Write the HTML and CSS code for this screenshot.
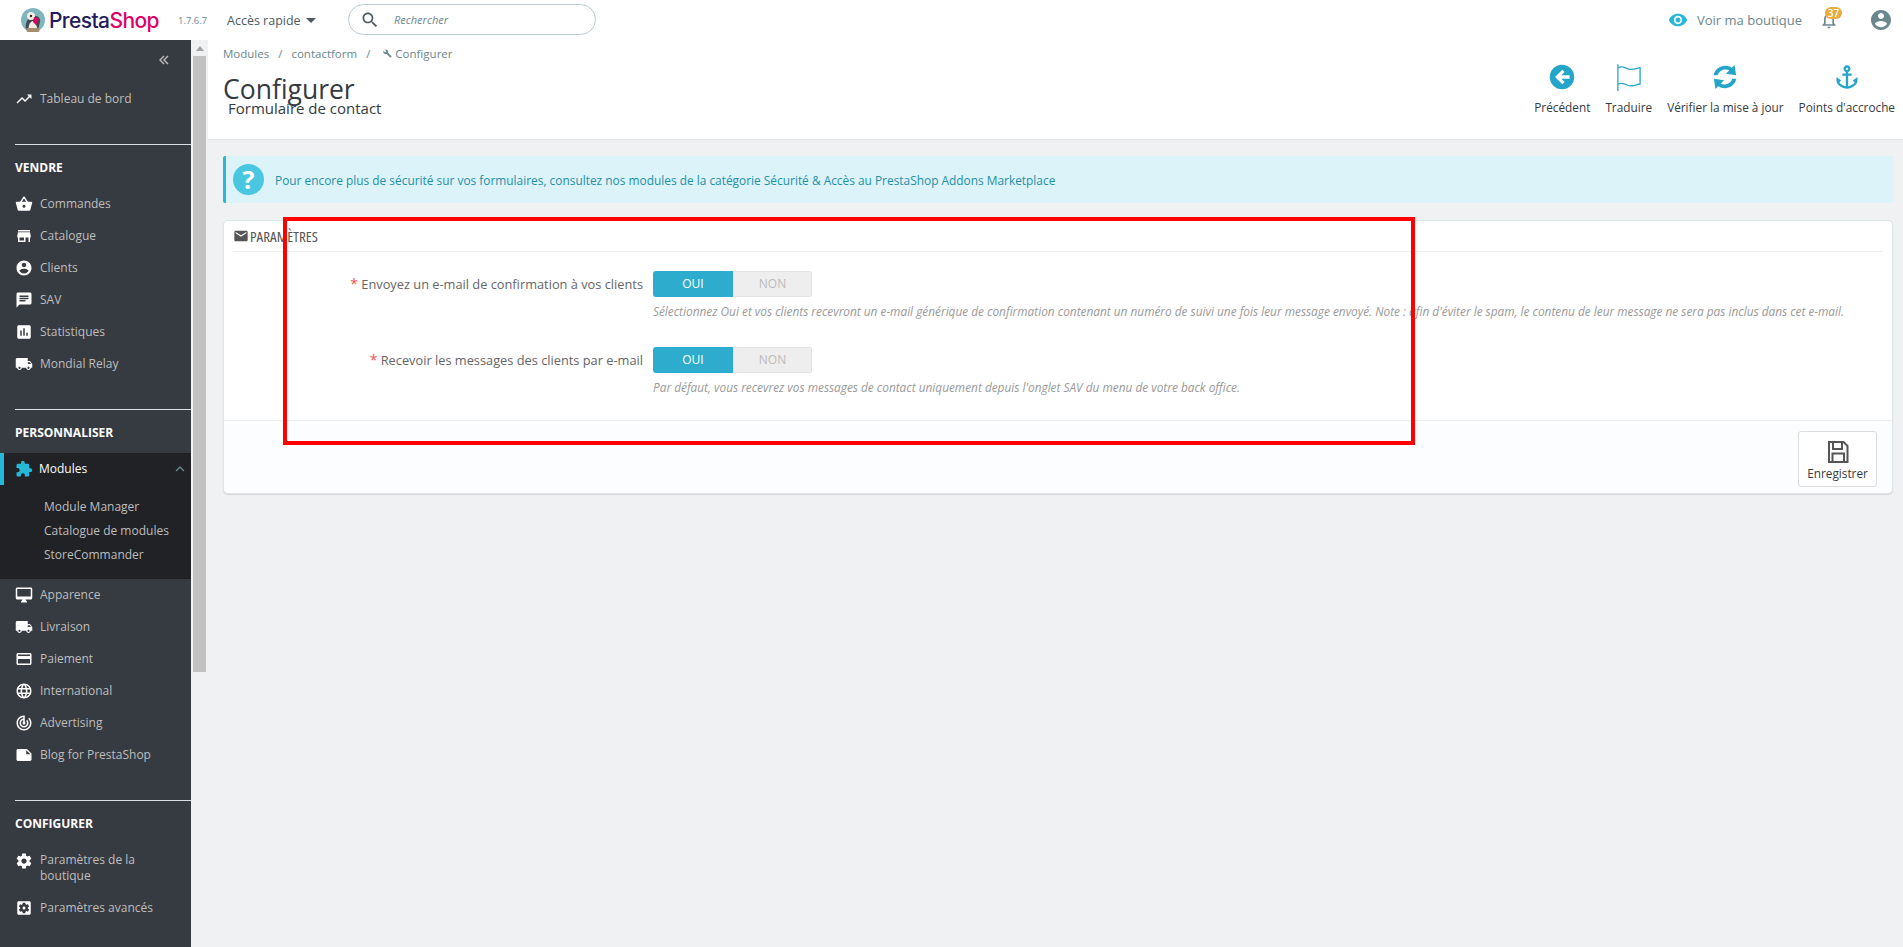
FILE: index.html
```html
<!DOCTYPE html>
<html lang="fr">
<head>
    <meta charset="UTF-8">
    <meta name="viewport" content="width=device-width, initial-scale=1.0">
    <title>Configurer - Formulaire de contact</title>
    <link rel="stylesheet" href="styles.css">
</head>
<body>
    <!-- Icon set -->
    <svg class="icon-defs" width="0" height="0">
        <symbol id="i-trend" viewBox="0 0 24 24"><path d="M16 6l2.29 2.29-4.88 4.88-4-4L2 16.59 3.41 18l6-6 4 4 6.3-6.29L22 12V6z"/></symbol>
        <symbol id="i-basket" viewBox="0 0 24 24"><path d="M17.21 9l-4.38-6.56c-.19-.28-.51-.42-.83-.42-.32 0-.64.14-.83.43L6.79 9H2c-.55 0-1 .45-1 1 0 .09.01.18.04.27l2.54 9.27c.23.84 1 1.46 1.92 1.46h13c.92 0 1.69-.62 1.93-1.46l2.54-9.27L23 10c0-.55-.45-1-1-1h-4.79zM9 9l3-4.4L15 9H9zm3 8c-1.1 0-2-.9-2-2s.9-2 2-2 2 .9 2 2-.9 2-2 2z"/></symbol>
        <symbol id="i-store" viewBox="0 0 24 24"><path d="M20 4H4v2h16V4zm1 10v-2l-1-5H4l-1 5v2h1v6h10v-6h4v6h2v-6h1zm-9 4H6v-4h6v4z"/></symbol>
        <symbol id="i-account" viewBox="0 0 24 24"><path d="M12 2C6.48 2 2 6.48 2 12s4.48 10 10 10 10-4.48 10-10S17.52 2 12 2zm0 3c1.66 0 3 1.34 3 3s-1.34 3-3 3-3-1.34-3-3 1.34-3 3-3zm0 14.2c-2.5 0-4.71-1.28-6-3.22.03-1.99 4-3.08 6-3.08 1.99 0 5.97 1.09 6 3.08-1.29 1.94-3.5 3.22-6 3.22z"/></symbol>
        <symbol id="i-chat" viewBox="0 0 24 24"><path d="M20 2H4c-1.1 0-1.99.9-1.99 2L2 22l4-4h14c1.1 0 2-.9 2-2V4c0-1.1-.9-2-2-2zM6 9h12v2H6V9zm8 5H6v-2h8v2zm4-6H6V6h12v2z"/></symbol>
        <symbol id="i-stats" viewBox="0 0 24 24"><path d="M19 3H5c-1.1 0-2 .9-2 2v14c0 1.1.9 2 2 2h14c1.1 0 2-.9 2-2V5c0-1.1-.9-2-2-2zM9 17H7v-7h2v7zm4 0h-2V7h2v10zm4 0h-2v-4h2v4z"/></symbol>
        <symbol id="i-truck" viewBox="0 0 24 24"><path d="M20 8h-3V4H3c-1.1 0-2 .9-2 2v11h2c0 1.66 1.34 3 3 3s3-1.34 3-3h6c0 1.66 1.34 3 3 3s3-1.34 3-3h2v-5l-3-4zM6 18.5c-.83 0-1.5-.67-1.5-1.5s.67-1.5 1.5-1.5 1.5.67 1.5 1.5-.67 1.5-1.5 1.5zm13.5-9l1.96 2.5H17V9.5h2.5zm-1.5 9c-.83 0-1.5-.67-1.5-1.5s.67-1.5 1.5-1.5 1.5.67 1.5 1.5-.67 1.5-1.5 1.5z"/></symbol>
        <symbol id="i-puzzle" viewBox="0 0 24 24"><path d="M20.5 11H19V7c0-1.1-.9-2-2-2h-4V3.5C13 2.12 11.88 1 10.5 1S8 2.12 8 3.5V5H4c-1.1 0-1.99.9-1.99 2v3.8H3.5c1.49 0 2.7 1.21 2.7 2.7s-1.21 2.7-2.7 2.7H2V20c0 1.1.9 2 2 2h3.8v-1.5c0-1.49 1.21-2.7 2.7-2.7 1.49 0 2.7 1.21 2.7 2.7V22H17c1.1 0 2-.9 2-2v-4h1.5c1.38 0 2.5-1.12 2.5-2.5S21.88 11 20.5 11z"/></symbol>
        <symbol id="i-desktop" viewBox="0 0 24 24"><path d="M21 2H3c-1.1 0-2 .9-2 2v12c0 1.1.9 2 2 2h7l-2 3v1h8v-1l-2-3h7c1.1 0 2-.9 2-2V4c0-1.1-.9-2-2-2zm0 12H3V4h18v10z"/></symbol>
        <symbol id="i-card" viewBox="0 0 24 24"><path d="M20 4H4c-1.11 0-1.99.89-1.99 2L2 18c0 1.11.89 2 2 2h16c1.11 0 2-.89 2-2V6c0-1.11-.89-2-2-2zm0 14H4v-6h16v6zm0-10H4V6h16v2z"/></symbol>
        <symbol id="i-globe" viewBox="0 0 24 24"><path d="M11.99 2C6.47 2 2 6.48 2 12s4.47 10 9.99 10C17.52 22 22 17.52 22 12S17.52 2 11.99 2zm6.93 6h-2.95c-.32-1.25-.78-2.45-1.38-3.56 1.84.63 3.37 1.91 4.33 3.56zM12 4.04c.83 1.2 1.48 2.53 1.91 3.96h-3.82c.43-1.43 1.08-2.76 1.91-3.96zM4.26 14C4.1 13.36 4 12.69 4 12s.1-1.36.26-2h3.38c-.08.66-.14 1.32-.14 2 0 .68.06 1.34.14 2H4.26zm.82 2h2.95c.32 1.25.78 2.45 1.38 3.56-1.84-.63-3.37-1.9-4.33-3.56zm2.95-8H5.08c.96-1.66 2.49-2.93 4.33-3.56C8.81 5.55 8.35 6.75 8.03 8zM12 19.96c-.83-1.2-1.48-2.53-1.91-3.96h3.82c-.43 1.43-1.08 2.76-1.91 3.96zM14.34 14H9.66c-.09-.66-.16-1.32-.16-2 0-.68.07-1.35.16-2h4.68c.09.65.16 1.32.16 2 0 .68-.07 1.34-.16 2zm.25 5.56c.6-1.11 1.06-2.31 1.38-3.56h2.95c-.96 1.65-2.49 2.93-4.33 3.56zM16.36 14c.08-.66.14-1.32.14-2 0-.68-.06-1.34-.14-2h3.38c.16.64.26 1.31.26 2s-.1 1.36-.26 2h-3.38z"/></symbol>
        <symbol id="i-target" viewBox="0 0 24 24"><path d="M19.07 4.93l-1.41 1.41C19.1 7.79 20 9.79 20 12c0 4.42-3.58 8-8 8s-8-3.58-8-8c0-4.08 3.05-7.44 7-7.93v2.02C8.16 6.57 6 9.03 6 12c0 3.31 2.69 6 6 6s6-2.69 6-6c0-1.66-.67-3.16-1.76-4.24l-1.41 1.41C15.55 9.9 16 10.9 16 12c0 2.21-1.79 4-4 4s-4-1.79-4-4c0-1.86 1.28-3.41 3-3.86v2.14c-.6.35-1 .98-1 1.72 0 1.1.9 2 2 2s2-.9 2-2c0-.74-.4-1.38-1-1.72V2h-1C6.48 2 2 6.48 2 12s4.48 10 10 10 10-4.48 10-10c0-2.76-1.12-5.26-2.93-7.07z"/></symbol>
        <symbol id="i-note" viewBox="0 0 24 24"><path d="M22 10l-6-6H4c-1.1 0-2 .9-2 2v12.01c0 1.1.9 1.99 2 1.99l16-.01c1.1 0 2-.89 2-1.99v-8zm-7-4.5l5.5 5.5H15V5.5z"/></symbol>
        <symbol id="i-gear" viewBox="0 0 24 24"><path d="M19.43 12.98c.04-.32.07-.64.07-.98s-.03-.66-.07-.98l2.11-1.65c.19-.15.24-.42.12-.64l-2-3.46c-.12-.22-.39-.3-.61-.22l-2.49 1c-.52-.4-1.08-.73-1.69-.98l-.38-2.65C14.46 2.18 14.25 2 14 2h-4c-.25 0-.46.18-.49.42l-.38 2.65c-.61.25-1.17.59-1.69.98l-2.49-1c-.23-.09-.49 0-.61.22l-2 3.46c-.13.22-.07.49.12.64l2.11 1.65c-.04.32-.07.65-.07.98s.03.66.07.98l-2.11 1.65c-.19.15-.24.42-.12.64l2 3.46c.12.22.39.3.61.22l2.49-1c.52.4 1.08.73 1.69.98l.38 2.65c.03.24.24.42.49.42h4c.25 0 .46-.18.49-.42l.38-2.65c.61-.25 1.17-.59 1.69-.98l2.49 1c.23.09.49 0 .61-.22l2-3.46c.12-.22.07-.49-.12-.64l-2.11-1.65zM12 15.5c-1.93 0-3.5-1.57-3.5-3.5s1.57-3.5 3.5-3.5 3.5 1.57 3.5 3.5-1.57 3.5-3.5 3.5z"/></symbol>
        <symbol id="i-gearbox" viewBox="0 0 24 24"><path d="M12 10c-1.1 0-2 .9-2 2s.9 2 2 2 2-.9 2-2-.9-2-2-2zm7-7H5c-1.11 0-2 .9-2 2v14c0 1.1.89 2 2 2h14c1.11 0 2-.9 2-2V5c0-1.1-.89-2-2-2zm-1.75 9c0 .23-.02.46-.05.68l1.48 1.16c.13.11.17.3.08.45l-1.4 2.42c-.09.15-.27.21-.43.15l-1.74-.7c-.36.28-.76.51-1.18.69l-.26 1.85c-.03.17-.18.3-.35.3h-2.8c-.17 0-.32-.13-.35-.29l-.26-1.85c-.43-.18-.82-.41-1.18-.69l-1.74.7c-.16.06-.34 0-.43-.15l-1.4-2.42c-.09-.15-.05-.34.08-.45l1.48-1.16c-.03-.23-.05-.46-.05-.69 0-.23.02-.46.05-.68l-1.48-1.16c-.13-.11-.17-.3-.08-.45l1.4-2.42c.09-.15.27-.21.43-.15l1.74.7c.36-.28.76-.51 1.18-.69l.26-1.85c.03-.17.18-.3.35-.3h2.8c.17 0 .32.13.35.29l.26 1.85c.43.18.82.41 1.18.69l1.74-.7c.16-.06.34 0 .43.15l1.4 2.42c.09.15.05.34-.08.45l-1.48 1.16c.03.23.05.46.05.69z"/></symbol>
    </svg>

    <!-- Top bar -->
    <header class="topbar">
        <div class="logo">
            <svg class="logo-bird" viewBox="0 0 24 24">
                <circle cx="12" cy="12" r="12" fill="#7fb5bd"/>
                <path d="M5 22c-1-6 1-13 7-14 5-1 8 3 7 6l-2 8z" fill="#3e4a55"/>
                <path d="M8 23c-1-4 0-9 4-10 2 2 5 5 4 10z" fill="#f3ede2"/>
                <circle cx="10" cy="8" r="4" fill="#f3ede2"/>
                <circle cx="10" cy="8" r="1.2" fill="#252a33"/>
                <path d="M13 9l5 2-3 6-3-3z" fill="#df0067"/>
                <path d="M5 20h14l-1 4H6z" fill="#a58d72"/>
            </svg>
            <span class="logo-text"><span class="logo-presta">Presta</span><span class="logo-shop">Shop</span></span>
        </div>
        <span class="version">1.7.6.7</span>
        <span class="quick">Accès rapide<i class="caret"></i></span>
        <div class="search">
            <svg class="search-icon" viewBox="0 0 24 24"><path d="M15.5 14h-.79l-.28-.27C15.41 12.59 16 11.11 16 9.5 16 5.91 13.09 3 9.5 3S3 5.91 3 9.5 5.91 16 9.5 16c1.61 0 3.09-.59 4.23-1.57l.27.28v.79l5 4.99L20.49 19l-4.99-5zm-6 0C7.01 14 5 11.99 5 9.5S7.01 5 9.5 5 14 7.01 14 9.5 11.99 14 9.5 14z"/></svg>
            <span class="search-text">Rechercher</span>
        </div>
        <div class="topbar-right">
            <svg class="eye" viewBox="0 0 24 24"><path d="M12 4.5C7 4.5 2.73 7.61 1 12c1.73 4.39 6 7.5 11 7.5s9.27-3.11 11-7.5c-1.73-4.39-6-7.5-11-7.5zM12 17c-2.76 0-5-2.24-5-5s2.24-5 5-5 5 2.24 5 5-2.24 5-5 5zm0-8c-1.66 0-3 1.34-3 3s1.34 3 3 3 3-1.34 3-3-1.34-3-3-3z"/></svg>
            <span class="shop-link">Voir ma boutique</span>
            <div class="bell">
                <svg viewBox="0 0 24 24"><path d="M12 22c1.1 0 2-.9 2-2h-4c0 1.1.9 2 2 2zm6-6v-5c0-3.07-1.63-5.64-4.5-6.32V4c0-.83-.67-1.5-1.5-1.5s-1.5.67-1.5 1.5v.68C7.64 5.36 6 7.92 6 11v5l-2 2v1h16v-1l-2-2zm-2 1H8v-6c0-2.48 1.51-4.5 4-4.5s4 2.02 4 4.5v6z"/></svg>
                <span class="badge">37</span>
            </div>
            <svg class="user"><use href="#i-account"/></svg>
        </div>
    </header>

    <div class="layout">
        <!-- Sidebar -->
        <nav class="sidebar">
            <div class="collapse">
                <svg viewBox="0 0 14 14"><path d="M7 3L3 7l4 4M11 3L7 7l4 4"/></svg>
            </div>
            <a class="nav-item"><svg><use href="#i-trend"/></svg><span>Tableau de bord</span></a>

            <div class="nav-title">VENDRE</div>
            <a class="nav-item"><svg><use href="#i-basket"/></svg><span>Commandes</span></a>
            <a class="nav-item"><svg><use href="#i-store"/></svg><span>Catalogue</span></a>
            <a class="nav-item"><svg><use href="#i-account"/></svg><span>Clients</span></a>
            <a class="nav-item"><svg><use href="#i-chat"/></svg><span>SAV</span></a>
            <a class="nav-item"><svg><use href="#i-stats"/></svg><span>Statistiques</span></a>
            <a class="nav-item"><svg><use href="#i-truck"/></svg><span>Mondial Relay</span></a>

            <div class="nav-title">PERSONNALISER</div>
            <a class="nav-item nav-active"><svg><use href="#i-puzzle"/></svg><span>Modules</span>
                <svg class="nav-chevron" viewBox="0 0 24 24"><path d="M6 15l6-6 6 6"/></svg>
            </a>
            <div class="subnav">
                <a>Module Manager</a>
                <a>Catalogue de modules</a>
                <a>StoreCommander</a>
            </div>
            <a class="nav-item"><svg><use href="#i-desktop"/></svg><span>Apparence</span></a>
            <a class="nav-item"><svg><use href="#i-truck"/></svg><span>Livraison</span></a>
            <a class="nav-item"><svg><use href="#i-card"/></svg><span>Paiement</span></a>
            <a class="nav-item"><svg><use href="#i-globe"/></svg><span>International</span></a>
            <a class="nav-item"><svg><use href="#i-target"/></svg><span>Advertising</span></a>
            <a class="nav-item"><svg><use href="#i-note"/></svg><span>Blog for PrestaShop</span></a>

            <div class="nav-title">CONFIGURER</div>
            <a class="nav-item nav-tall"><svg><use href="#i-gear"/></svg><span>Paramètres de la boutique</span></a>
            <a class="nav-item"><svg><use href="#i-gearbox"/></svg><span>Paramètres avancés</span></a>
        </nav>

        <!-- Fake browser scrollbar of the sidebar -->
        <div class="scrollbar">
            <i class="scroll-arrow"></i>
            <div class="scroll-thumb"></div>
        </div>

        <main class="main">
            <div class="page-head">
                <div class="page-head-left">
                    <div class="breadcrumb">
                        <span>Modules</span><i>/</i><span>contactform</span><i>/</i>
                        <svg class="wrench" viewBox="0 0 24 24"><path d="M22.7 19l-9.1-9.1c.9-2.3.4-5-1.5-6.9-2-2-5-2.4-7.4-1.3L9 6 6 9 1.600 4.700C.4 7.100.9 10.100 2.900 12.100c1.900 1.900 4.600 2.400 6.900 1.500l9.100 9.100c.4.400 1 .4 1.400 0l2.300-2.300c.5-.4.500-1.100.1-1.400z"/></svg>
                        <span>Configurer</span>
                    </div>
                    <h1>Configurer</h1>
                    <h2>Formulaire de contact</h2>
                </div>
                <div class="toolbar">
                    <a class="tool">
                        <svg viewBox="0 0 24 24"><path fill-rule="evenodd" d="M12 1.500a10.500 10.500 0 1 0 0 21 10.500 10.500 0 0 0 0-21zM12.300 5.800l1.900 1.900-2.800 2.800h7.100v3h-7.100l2.800 2.800-1.900 1.900L6 12z"/></svg>
                        <span>Précédent</span>
                    </a>
                    <a class="tool">
                        <svg viewBox="0 0 24 24" class="tool-line"><path d="M2.500 1v23M3 4c5-2.500 6.500 2 11 1.500 3 0 5-1 7.500-1.500v14c-3 .5-4.500 1.500-7.500 1.500-4.500 .5-6-3.500-11-1.500"/></svg>
                        <span>Traduire</span>
                    </a>
                    <a class="tool">
                        <svg viewBox="0 0 24 24"><path d="M20.200 1.800l1.300 8.700-8.700-1.300 2.900-2.900C12.400 4.600 7 6 5.700 10.500H2.300C3.700 3.400 11.800 .3 17.900 4.100zM3.800 22.200l-1.300-8.700 8.700 1.300-2.900 2.900c3.300 1.700 8.700.3 10-4.200h3.400c-1.400 7.100-9.500 10.200-15.600 6.400z"/></svg>
                        <span>Vérifier la mise à jour</span>
                    </a>
                    <a class="tool">
                        <svg viewBox="0 0 24 24"><path d="M17 15l1.550 1.550c-.96 1.690-3.330 3.040-5.550 3.370V11h3V9h-3V7.820C14.160 7.400 15 6.300 15 5c0-1.650-1.350-3-3-3S9 3.350 9 5c0 1.300.84 2.400 2 2.820V9H8v2h3v8.920c-2.220-.33-4.590-1.680-5.550-3.370L7 15l-4-3v3c0 3.880 4.920 7 9 7s9-3.120 9-7v-3l-4 3zM12 4c.55 0 1 .45 1 1s-.45 1-1 1-1-.45-1-1 .45-1 1-1z"/></svg>
                        <span>Points d'accroche</span>
                    </a>
                </div>
            </div>

            <div class="content">
                <div class="alert">
                    <span class="alert-icon">?</span>
                    <p>Pour encore plus de sécurité sur vos formulaires, consultez nos modules de la catégorie Sécurité &amp; Accès au <a>PrestaShop Addons Marketplace</a></p>
                </div>

                <section class="panel">
                    <div class="panel-heading">
                        <svg viewBox="0 0 24 24"><path d="M20 4H4c-1.100 0-2 .9-2 2v12c0 1.100.9 2 2 2h16c1.100 0 2-.9 2-2V6c0-1.100-.9-2-2-2zm0 4l-8 5-8-5V6l8 5 8-5v2z"/></svg>
                        <span class="panel-title">PARAMÈTRES</span>
                    </div>
                    <div class="panel-body">
                        <div class="form-row">
                            <label><em>*</em> Envoyez un e-mail de confirmation à vos clients</label>
                            <div class="field">
                                <div class="switch"><span class="switch-on">OUI</span><span class="switch-off">NON</span></div>
                                <p class="help">Sélectionnez Oui et vos clients recevront un e-mail générique de confirmation contenant un numéro de suivi une fois leur message envoyé. Note : afin d'éviter le spam, le contenu de leur message ne sera pas inclus dans cet e-mail.</p>
                            </div>
                        </div>
                        <div class="form-row">
                            <label><em>*</em> Recevoir les messages des clients par e-mail</label>
                            <div class="field">
                                <div class="switch"><span class="switch-on">OUI</span><span class="switch-off">NON</span></div>
                                <p class="help">Par défaut, vous recevrez vos messages de contact uniquement depuis l'onglet SAV du menu de votre back office.</p>
                            </div>
                        </div>
                    </div>
                    <div class="panel-footer">
                        <button class="save">
                            <svg viewBox="0 0 24 24"><path d="M3 2h14.500L21.500 6v16H3zM7 2.500v6.500h9V2.500M6.500 21.500v-8h11.500v8"/></svg>
                            <span>Enregistrer</span>
                        </button>
                    </div>
                </section>
            </div>
        </main>
    </div>

    <!-- Annotation drawn over the screenshot -->
    <div class="annotation"></div>
</body>
</html>
```

FILE: styles.css
```css
* {
    box-sizing: border-box;
}
html, body {
    height: 100%;
}
body {
    margin: 0;
    font-family: "Open Sans", sans-serif;
    font-size: 12px;
    color: #363a41;
    background-color: #eff1f2;
    overflow: hidden;
}
.icon-defs {
    position: absolute;
}

/* top bar */
.topbar {
    display: flex;
    align-items: center;
    height: 40px;
    background-color: white;
}
.logo {
    display: flex;
    align-items: center;
    margin-left: 21px;
    width: 157px;
}
.logo-bird {
    width: 24px;
    height: 24px;
    flex: none;
}
.logo-text {
    margin-left: 4px;
    font-family: Inter, sans-serif;
    font-size: 21px;
    font-weight: 500;
    letter-spacing: -0.6px;
}
.logo-presta {
    color: #251b5b;
}
.logo-shop {
    color: #df0067;
}
.version {
    width: 49px;
    font-size: 9.5px;
    color: #6c868e;
}
.quick {
    display: flex;
    align-items: center;
    width: 121px;
    font-size: 12.5px;
    color: #4d5a60;
}
.caret {
    margin-left: 5px;
    border-left: 5px solid transparent;
    border-right: 5px solid transparent;
    border-top: 5px solid #4d5a60;
}
.search {
    display: flex;
    align-items: center;
    width: 248px;
    height: 31px;
    margin-bottom: 1px;
    padding-left: 11px;
    border: 1px solid #bbcdd2;
    border-radius: 16px;
}
.search-icon {
    width: 20px;
    height: 20px;
    fill: #4d5a60;
}
.search-text {
    margin-left: 14px;
    font-size: 11px;
    font-style: italic;
    color: #6c868e;
}
.topbar-right {
    display: flex;
    align-items: center;
    margin-left: auto;
    padding-right: 10px;
}
.eye {
    width: 20px;
    height: 20px;
    fill: #25b9d7;
}
.shop-link {
    margin-left: 9px;
    width: 122px;
    font-size: 13px;
    color: #6c868e;
}
.bell {
    position: relative;
    width: 20px;
    height: 22px;
}
.bell svg {
    width: 20px;
    height: 22px;
    fill: #6c868e;
}
.badge {
    position: absolute;
    top: -2px;
    left: 6px;
    width: 17px;
    height: 12px;
    border-radius: 6px;
    background-color: #e9ab3c;
    color: white;
    font-size: 10px;
    font-weight: 600;
    line-height: 12px;
    text-align: center;
}
.user {
    width: 24px;
    height: 24px;
    margin-left: 30px;
    fill: #6c868e;
}

/* page layout */
.layout {
    display: flex;
    height: 907px;
}
.sidebar {
    flex: none;
    width: 191px;
    background-color: #363a41;
    color: #bebebe;
}
.collapse {
    display: flex;
    justify-content: flex-end;
    height: 43px;
    padding: 13px 20px 0 0;
}
.collapse svg {
    width: 14px;
    height: 14px;
    fill: none;
    stroke: #bebebe;
    stroke-width: 1.4;
}
.nav-item {
    display: flex;
    align-items: center;
    height: 32px;
    padding-left: 15px;
    line-height: 16px;
}
.nav-item svg {
    flex: none;
    width: 18px;
    height: 18px;
    margin-right: 7px;
    fill: white;
}
.nav-tall {
    height: 48px;
    align-items: flex-start;
    padding: 8px 30px 0 15px;
}
.nav-title {
    height: 44px;
    margin: 29px 0 0 15px;
    border-top: 1px solid #d5dfe2;
    padding-top: 15px;
    font-size: 12px;
    font-weight: 700;
    line-height: 16px;
    color: white;
}
.nav-active {
    background-color: #202226;
    border-left: 4px solid #25b9d7;
    padding-left: 11px;
    color: white;
}
.nav-active svg {
    margin-right: 6px;
    fill: #25b9d7;
}
.nav-item .nav-chevron {
    width: 16px;
    height: 16px;
    margin: 0 3px 0 auto;
    fill: none;
    stroke: #6c868e;
    stroke-width: 2;
}
.subnav {
    height: 94px;
    padding-top: 10px;
    background-color: #202226;
}
.subnav a {
    display: block;
    height: 24px;
    padding-left: 44px;
    line-height: 24px;
}
.scrollbar {
    flex: none;
    width: 17px;
    padding: 0 2px;
}
.scroll-arrow {
    display: block;
    width: 0;
    margin: 6px auto 5px;
    border-left: 4px solid transparent;
    border-right: 4px solid transparent;
    border-bottom: 5px solid #a3a3a3;
}
.scroll-thumb {
    height: 616px;
    margin-top: 1px;
    background-color: #c1c1c1;
}
.main {
    flex: 1;
    min-width: 0;
}

/* page head */
.page-head {
    display: flex;
    justify-content: space-between;
    height: 100px;
    background-color: white;
    border-bottom: 1px solid #e4e6e8;
    padding: 0 8px 0 15px;
}
.breadcrumb {
    display: flex;
    align-items: center;
    height: 27px;
    font-size: 11.5px;
    color: #6c868e;
}
.breadcrumb i {
    margin: 0 9px;
    font-style: normal;
    color: #6c868e;
}
.wrench {
    width: 9px;
    height: 9px;
    margin: 0 3px 0 4px;
    fill: #6c868e;
}
.page-head h1 {
    margin: 6px 0 0;
    font-size: 26.5px;
    font-weight: 400;
    line-height: 32px;
    color: #363a41;
}
.page-head h2 {
    margin: -7px 0 0 5px;
    font-size: 15px;
    font-weight: 400;
    line-height: 20px;
    color: #363a41;
}
.toolbar {
    display: flex;
    gap: 15px;
    padding-top: 22px;
}
.tool {
    display: flex;
    flex-direction: column;
    align-items: center;
    font-size: 11.8px;
    color: #363a41;
}
.tool svg {
    width: 28px;
    height: 28px;
    margin: 1px 0 8px;
    fill: #25a5c9;
}
.tool .tool-line {
    fill: none;
    stroke: #25a5c9;
    stroke-width: 1.1;
}
.tool span {
    line-height: 16px;
    white-space: nowrap;
}

/* content */
.content {
    padding: 16px 10px 0 15px;
}
.alert {
    display: flex;
    align-items: center;
    height: 47px;
    padding-left: 7px;
    border-left: 3px solid #25b9d7;
    border-radius: 2px;
    background-color: #dcf4f9;
}
.alert-icon {
    flex: none;
    width: 31px;
    height: 31px;
    border-radius: 50%;
    background-color: #4ac7e0;
    color: white;
    font-size: 25px;
    font-weight: 700;
    line-height: 31px;
    text-align: center;
}
.alert p {
    margin: 0 0 0 11px;
    font-size: 11.9px;
    color: #1f8fa8;
}
.panel {
    margin-top: 17px;
    border: 1px solid #dbe6e9;
    border-radius: 5px;
    background-color: white;
    box-shadow: 0 1px 1px #d5d5d5;
}
.panel-heading {
    display: flex;
    align-items: center;
    height: 31px;
    margin: 0 9px;
    border-bottom: 1px solid #eeeeee;
}
.panel-heading svg {
    width: 16px;
    height: 16px;
    fill: #555;
}
.panel-title {
    margin-left: 1px;
    font-size: 15px;
    font-stretch: 75%;
    color: #555;
}
.panel-body {
    height: 168px;
    padding-top: 19px;
}
.form-row {
    display: flex;
    height: 76px;
}
.form-row label {
    width: 419px;
    padding-top: 4px;
    font-size: 12.8px;
    line-height: 18px;
    text-align: right;
    color: #666;
}
.form-row label em {
    font-style: normal;
    font-size: 14px;
    color: #f5555a;
}
.field {
    margin-left: 10px;
}
.switch {
    display: flex;
    width: 159px;
    height: 26px;
    border-radius: 3px;
    overflow: hidden;
    font-size: 12px;
    line-height: 25px;
    text-align: center;
}
.switch-on {
    width: 80px;
    background-color: #2eacce;
    color: white;
}
.switch-off {
    width: 79px;
    background-color: #eeeeee;
    color: #bbbbbb;
    box-shadow: inset 0 0 0 1px #e2e2e2;
}
.help {
    margin: 6px 0 0;
    font-size: 11.85px;
    font-style: italic;
    line-height: 16px;
    color: #999;
    white-space: nowrap;
}
.panel-footer {
    display: flex;
    justify-content: flex-end;
    height: 73px;
    padding: 10px 15px 0 0;
    border-top: 1px solid #eeeeee;
    border-radius: 0 0 5px 5px;
    background-color: #fcfdfe;
}
.save {
    display: flex;
    flex-direction: column;
    align-items: center;
    width: 79px;
    height: 56px;
    padding: 8px 0 0;
    border: 1px solid #dddddd;
    border-radius: 3px;
    background-color: white;
    font-family: "Open Sans", sans-serif;
    font-size: 11.8px;
    line-height: 19px;
    color: #363a41;
}
.save svg {
    width: 24px;
    height: 24px;
    fill: none;
    stroke: #555;
    stroke-width: 2;
}

/* red frame around the form */
.annotation {
    position: absolute;
    left: 283px;
    top: 217px;
    width: 1132px;
    height: 228px;
    border: 4px solid #ff0000;
}
```
